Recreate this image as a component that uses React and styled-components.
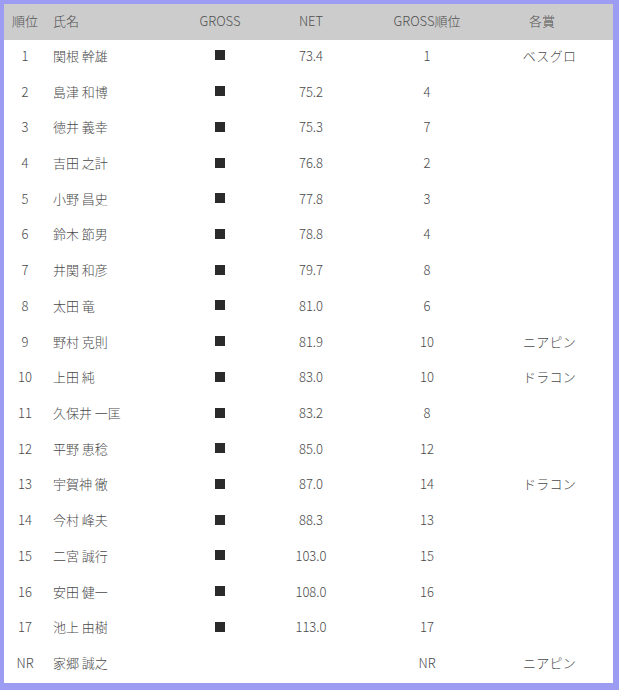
import React from "react";
import styled, { createGlobalStyle } from "styled-components";

const GlobalStyle = createGlobalStyle`
  html, body {
    margin: 0;
    padding: 0;
    background: #9c9cf2;
  }
  body {
    font-family: "Noto Sans CJK JP", "Noto Sans", sans-serif;
  }
`;

const Frame = styled.div`
  width: 619px;
  height: 690px;
  box-sizing: border-box;
  padding: 4px 6px 7px 4px;
  background: #9c9cf2;
`;

const Table = styled.div`
  background: #fff;
  height: 100%;
  display: flex;
  flex-direction: column;
`;

const Row = styled.div`
  display: grid;
  grid-template-columns: 42px 134px 80px 102px 130px 100px 1fr;
  align-items: center;
  height: ${(p) => (p.$head ? "36px" : "35.72px")};
  padding-bottom: ${(p) => (p.$head ? "3px" : "5px")};
  box-sizing: border-box;
  background: ${(p) => (p.$head ? "#cccccc" : "#ffffff")};
  color: ${(p) => (p.$head ? "#505050" : "#4a4a4a")};
  font-size: 13px;
  font-weight: 300;
`;

const Cell = styled.div`
  text-align: ${(p) => p.$align || "center"};
  padding-left: ${(p) => (p.$align === "left" ? "7px" : p.$kana ? "15px" : "0")};
  white-space: nowrap;
  letter-spacing: ${(p) => (p.$kana ? "0.3px" : "0")};
`;

const Mark = styled.span`
  display: block;
  margin: 0 auto;
  width: 10px;
  height: 10px;
  background: #2b2b2b;
`;

const rows = [
  ["1", "関根 幹雄", "73.4", "1", "ベスグロ"],
  ["2", "島津 和博", "75.2", "4", ""],
  ["3", "徳井 義幸", "75.3", "7", ""],
  ["4", "吉田 之計", "76.8", "2", ""],
  ["5", "小野 昌史", "77.8", "3", ""],
  ["6", "鈴木 節男", "78.8", "4", ""],
  ["7", "井関 和彦", "79.7", "8", ""],
  ["8", "太田 竜", "81.0", "6", ""],
  ["9", "野村 克則", "81.9", "10", "ニアピン"],
  ["10", "上田 純", "83.0", "10", "ドラコン"],
  ["11", "久保井 一匡", "83.2", "8", ""],
  ["12", "平野 恵稔", "85.0", "12", ""],
  ["13", "宇賀神 徹", "87.0", "14", "ドラコン"],
  ["14", "今村 峰夫", "88.3", "13", ""],
  ["15", "二宮 誠行", "103.0", "15", ""],
  ["16", "安田 健一", "108.0", "16", ""],
  ["17", "池上 由樹", "113.0", "17", ""],
  ["NR", "家郷 誠之", "", "NR", "ニアピン"],
];

export default function App() {
  return (
    <>
      <GlobalStyle />
      <Frame>
        <Table>
          <Row $head>
            <Cell>順位</Cell>
            <Cell $align="left">氏名</Cell>
            <Cell>GROSS</Cell>
            <Cell>NET</Cell>
            <Cell>GROSS順位</Cell>
            <Cell>各賞</Cell>
            <Cell />
          </Row>
          {rows.map(([rank, name, net, gross, prize]) => (
            <Row key={rank + name}>
              <Cell>{rank}</Cell>
              <Cell $align="left">{name}</Cell>
              <Cell>{net && <Mark aria-label="■" />}</Cell>
              <Cell>{net}</Cell>
              <Cell>{gross}</Cell>
              <Cell $kana>{prize}</Cell>
              <Cell />
            </Row>
          ))}
        </Table>
      </Frame>
    </>
  );
}
